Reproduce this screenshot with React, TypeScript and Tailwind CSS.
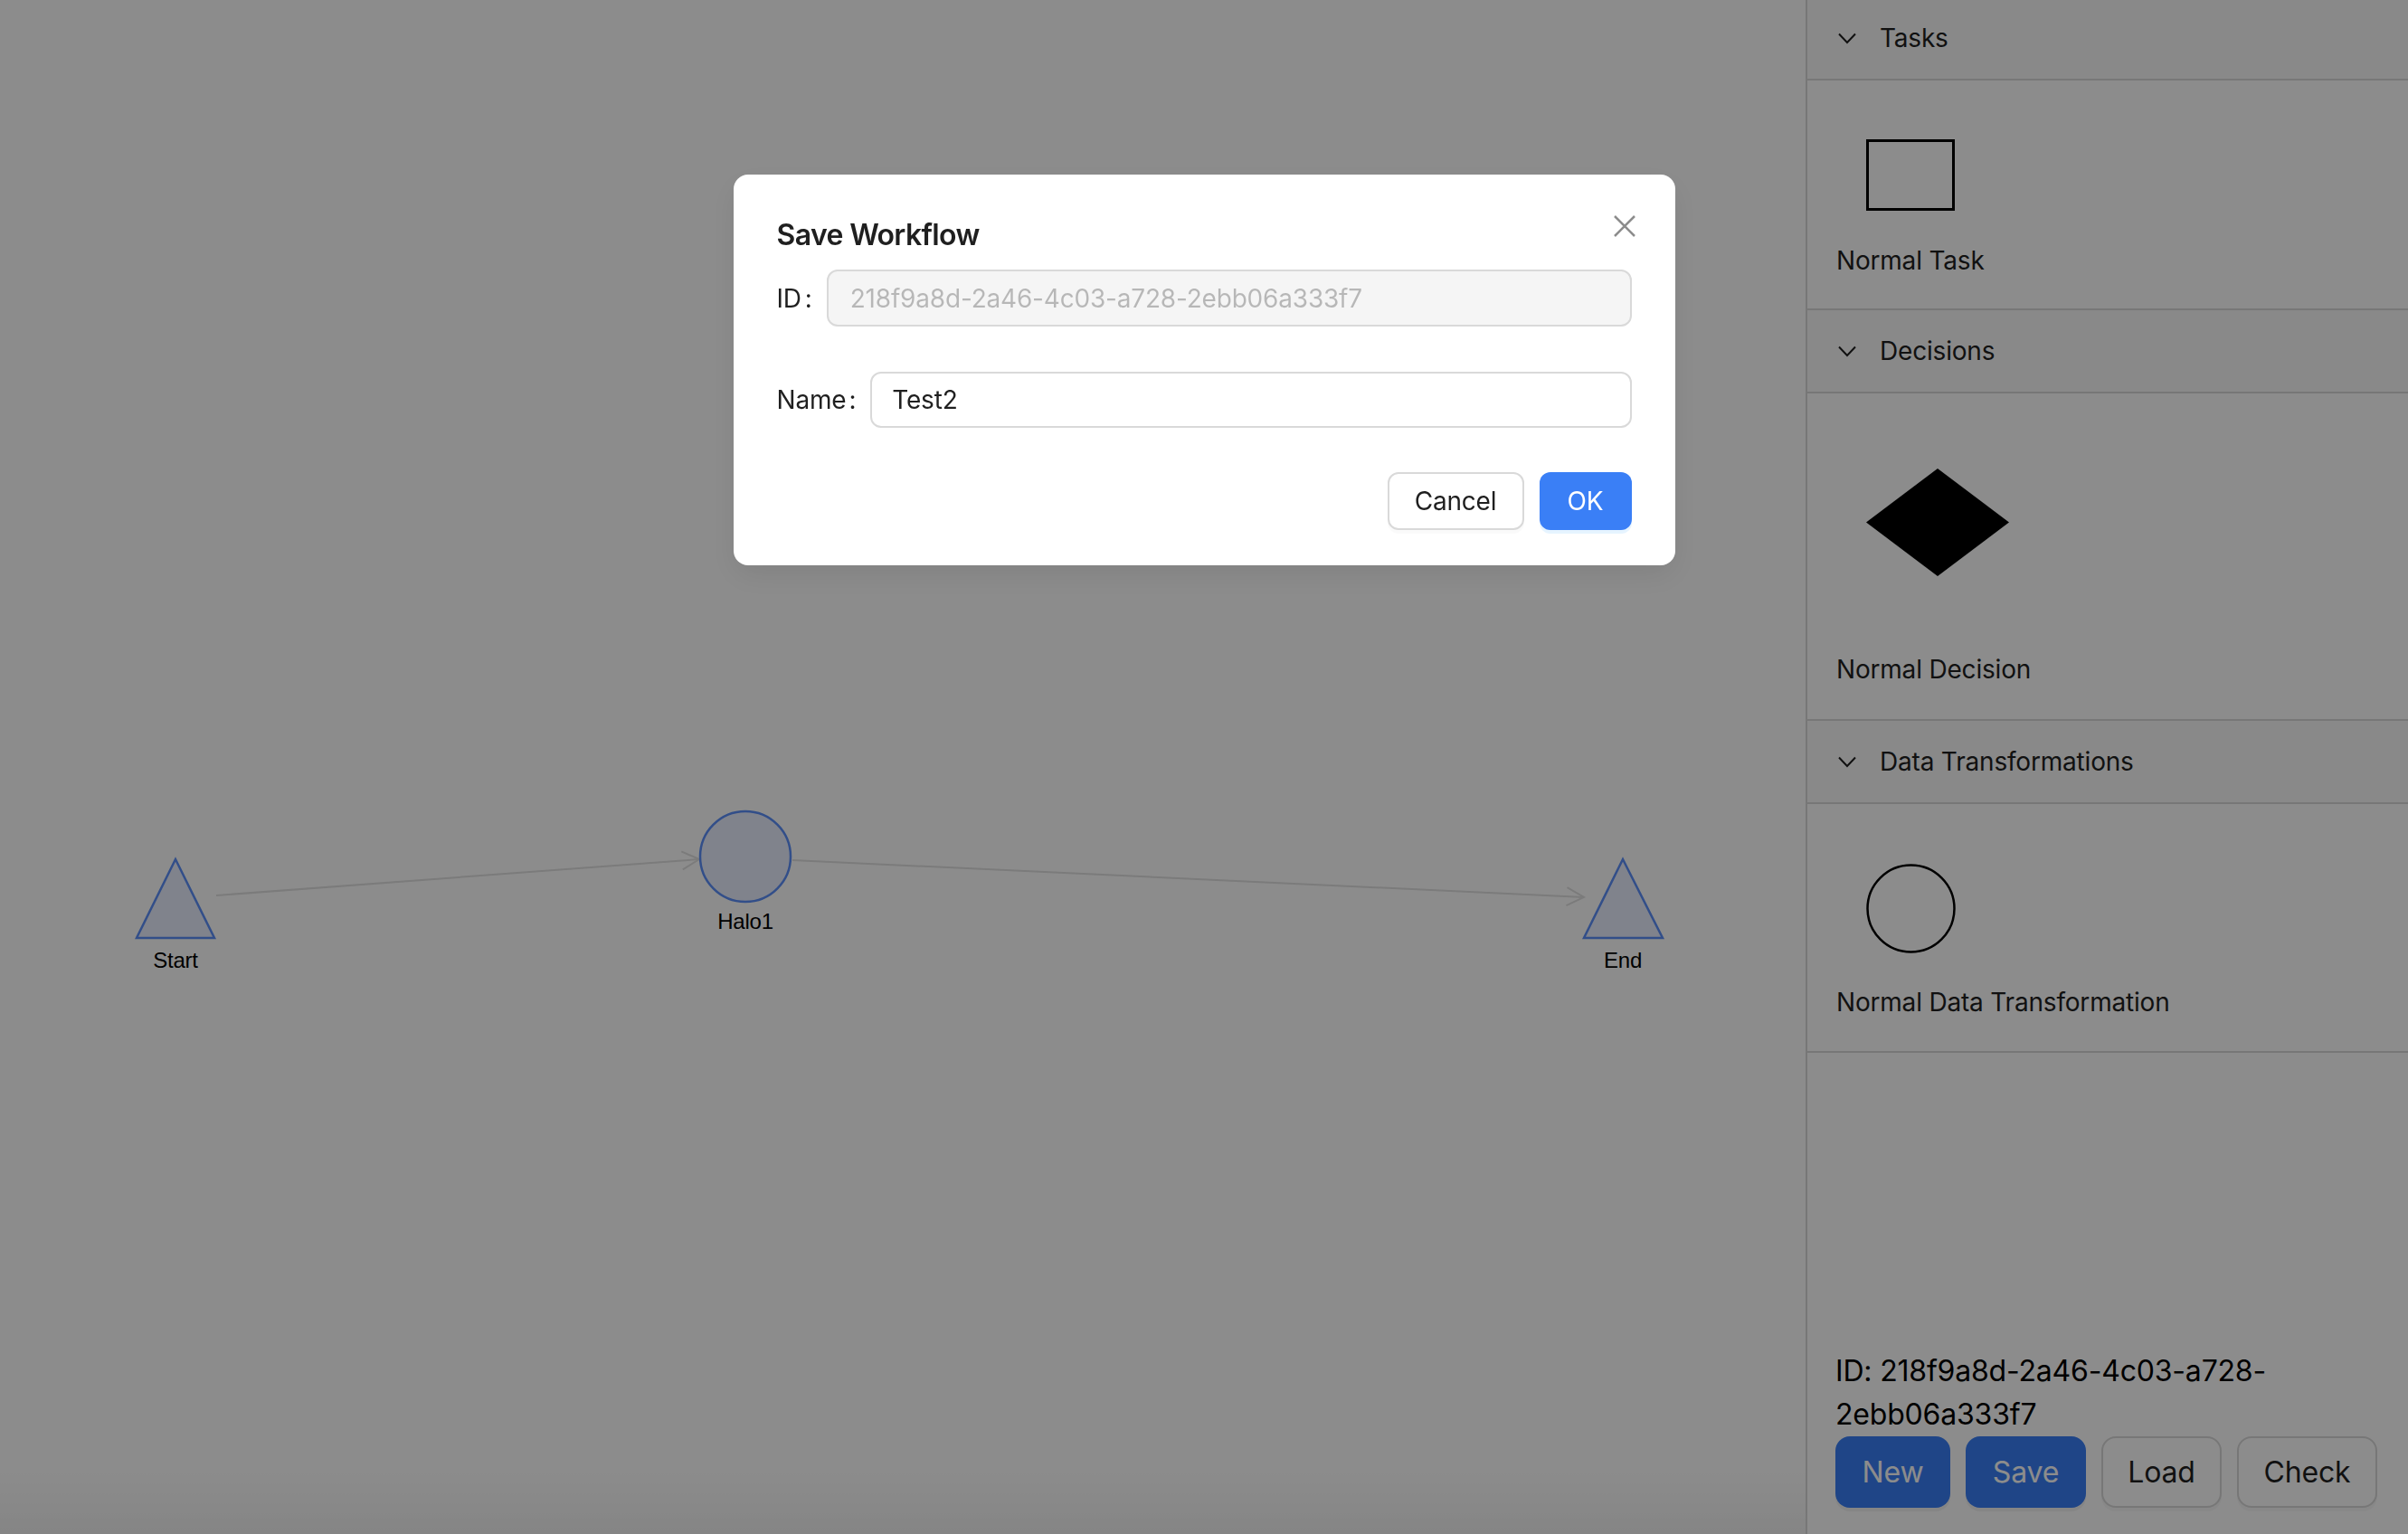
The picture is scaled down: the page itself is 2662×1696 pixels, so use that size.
import React from 'react';

const Chevron = () => (
  <svg width="20" height="13" viewBox="0 0 20 13" fill="none">
    <polyline points="1,1.5 10,11 19,1.5" stroke="#1f1f1f" strokeWidth="2" />
  </svg>
);

const SectionHeader = ({ title, className = '' }: { title: string; className?: string }) => (
  <div className={`flex h-[92px] items-center border-b-2 border-[#d9d9d9] bg-[#fafafa] pl-[34px] ${className}`}>
    <Chevron />
    <span className="ml-[26px] text-[28px] leading-[42px] text-[#1f1f1f]">{title}</span>
  </div>
);

const Graph = () => (
  <svg className="absolute inset-0" width="1996" height="1696">
    <g stroke="#e0e0e0" strokeWidth="2" fill="none">
      <line x1="239" y1="990" x2="773" y2="950" />
      <polyline points="754.8,961.4 773,950 753.3,941.4" />
      <line x1="876" y1="951" x2="1751" y2="992" />
      <polyline points="1731.5,1001.1 1751,992 1732.5,981.1" />
    </g>
    <g stroke="#5b8ff9" strokeWidth="2.5" fill="#e9eeff">
      <polygon points="194,950 151,1037 237,1037" />
      <circle cx="824" cy="947" r="50" />
      <polygon points="1794,950 1751,1037 1838,1037" />
    </g>
    <g fill="#000" fontSize="24" fontFamily="'Liberation Sans', Arial, sans-serif" textAnchor="middle" dominantBaseline="central">
      <text x="194" y="1061">Start</text>
      <text x="824" y="1018">Halo1</text>
      <text x="1794" y="1061">End</text>
    </g>
  </svg>
);

const Sidebar = () => (
  <div className="flex h-full w-[666px] flex-col border-l-2 border-[#d9d9d9] bg-white text-[#1f1f1f]">
    <SectionHeader title="Tasks" className="-mt-[3px]" />
    <div className="border-b-2 border-[#d9d9d9] pl-[32px] pt-[65px] pb-[32px]">
      <div className="ml-[33px] h-[79px] w-[98px] border-[3px] border-black" />
      <div className="mt-[34px] text-[28px] leading-[42px]">Normal Task</div>
    </div>

    <SectionHeader title="Decisions" />
    <div className="border-b-2 border-[#d9d9d9] pl-[32px] pt-[83px] pb-[34px]">
      <svg className="ml-[33px]" width="158" height="119" viewBox="0 0 158 119">
        <polygon points="79,0 158,59.5 79,119 0,59.5" fill="#000" />
      </svg>
      <div className="mt-[82px] text-[28px] leading-[42px]">Normal Decision</div>
    </div>

    <SectionHeader title="Data Transformations" />
    <div className="border-b-2 border-[#d9d9d9] pl-[32px] pt-[66px] pb-[33px]">
      <svg className="ml-[33px]" width="99" height="99" viewBox="0 0 99 99">
        <circle cx="49.5" cy="49.5" r="48" fill="none" stroke="#000" strokeWidth="2.5" />
      </svg>
      <div className="mt-[33px] text-[28px] leading-[42px]">Normal Data Transformation</div>
    </div>

    <div className="flex-1" />

    <div className="px-[31px] pb-[29px]">
      <div className="text-[32px] leading-[48px] text-black">ID: 218f9a8d-2a46-4c03-a728-2ebb06a333f7</div>
      <div className="flex gap-[17px] text-[32px]">
        <button className="h-[79px] w-[127px] rounded-[16px] bg-[#3a7ff6] text-white shadow-[0_4px_0_rgba(0,0,0,0.05)]">New</button>
        <button className="h-[79px] w-[133px] rounded-[16px] bg-[#3a7ff6] text-white shadow-[0_4px_0_rgba(0,0,0,0.05)]">Save</button>
        <button className="h-[79px] w-[133px] rounded-[16px] border-2 border-[#d9d9d9] bg-white text-[#1f1f1f] shadow-[0_4px_0_rgba(0,0,0,0.03)]">Load</button>
        <button className="h-[79px] w-[155px] rounded-[16px] border-2 border-[#d9d9d9] bg-white text-[#1f1f1f] shadow-[0_4px_0_rgba(0,0,0,0.03)]">Check</button>
      </div>
    </div>
  </div>
);

const SaveModal = () => (
  <>
    <div className="fixed inset-0 bg-black/45" />
    <div className="fixed inset-0 flex justify-center pt-[193px]">
      <div className="relative h-fit w-[1041px] rounded-[16px] bg-white px-[48px] pt-[43px] pb-[39px] text-[rgba(0,0,0,0.88)] shadow-[0_12px_32px_rgba(0,0,0,0.08)]">
        <button className="absolute right-[34px] top-[35px] flex h-[44px] w-[44px] items-center justify-center">
          <svg width="24" height="24" viewBox="0 0 24 24">
            <path d="M1 1 L23 23 M23 1 L1 23" stroke="rgba(0,0,0,0.45)" strokeWidth="2.5" />
          </svg>
        </button>
        <div className="mb-[14px] text-[32px] font-semibold leading-[48px] tracking-[-0.02em]">Save Workflow</div>

        <div className="mb-[50px] flex h-[63px] items-center">
          <label className="text-[28px]">ID<span className="ml-[4px] mr-[16px]">:</span></label>
          <div className="flex h-full flex-1 items-center rounded-[12px] border-2 border-[#d9d9d9] bg-[#f5f5f5] px-[24px] text-[28px] text-[rgba(0,0,0,0.25)]">
            218f9a8d-2a46-4c03-a728-2ebb06a333f7
          </div>
        </div>

        <div className="mb-[49px] flex h-[62px] items-center">
          <label className="text-[28px]">Name<span className="ml-[3px] mr-[16px]">:</span></label>
          <div className="flex h-full flex-1 items-center rounded-[12px] border-2 border-[#d9d9d9] bg-white px-[22px] text-[28px]">
            Test2
          </div>
        </div>

        <div className="flex justify-end gap-[17px]">
          <button className="h-[64px] w-[151px] rounded-[12px] border-2 border-[#d9d9d9] bg-white text-[28px] shadow-[0_4px_0_rgba(0,0,0,0.02)]">Cancel</button>
          <button className="h-[64px] w-[102px] rounded-[12px] bg-[#3a7ff6] text-[28px] text-white shadow-[0_4px_0_rgba(5,145,255,0.1)]">OK</button>
        </div>
      </div>
    </div>
  </>
);

export default function App() {
  return (
    <div className="flex h-[1696px] w-[2662px] overflow-hidden bg-white font-['Inter',sans-serif] tracking-[-0.012em]">
      <div className="relative h-full w-[1996px] bg-white">
        <Graph />
        <div className="absolute bottom-0 left-0 right-0 h-[70px] bg-linear-to-b from-transparent to-black/[0.05]" />
      </div>
      <Sidebar />
      <SaveModal />
    </div>
  );
}
